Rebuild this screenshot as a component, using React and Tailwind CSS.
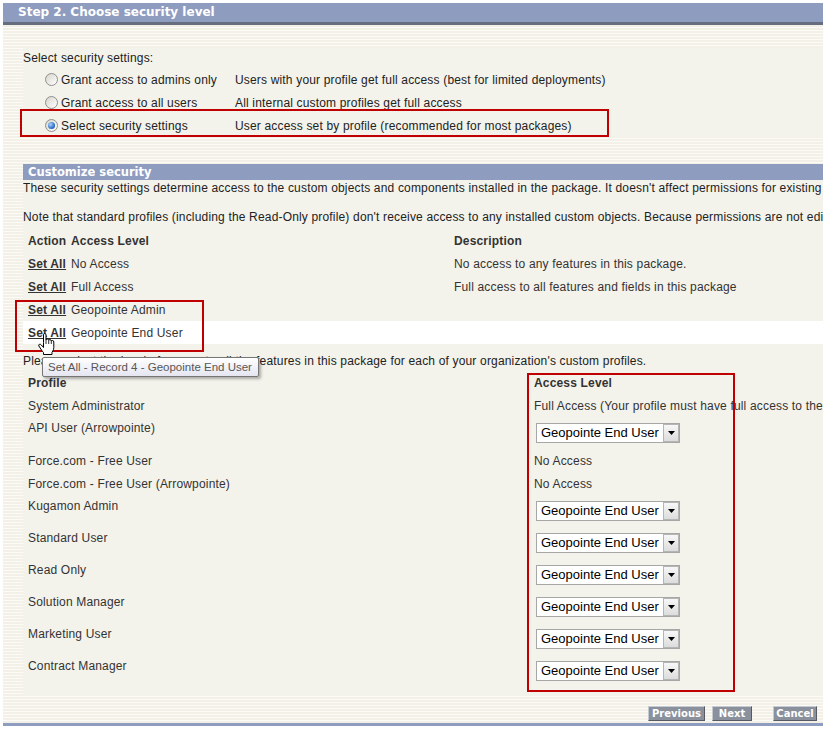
import React from 'react';

const options = [
  { label: 'Grant access to admins only', desc: 'Users with your profile get full access (best for limited deployments)' },
  { label: 'Grant access to all users', desc: 'All internal custom profiles get full access' },
  { label: 'Select security settings', desc: 'User access set by profile (recommended for most packages)', checked: true },
];

const levels = [
  { name: 'No Access', desc: 'No access to any features in this package.' },
  { name: 'Full Access', desc: 'Full access to all features and fields in this package' },
  { name: 'Geopointe Admin', desc: '' },
  { name: 'Geopointe End User', desc: '', hover: true },
];

const profiles = [
  { name: 'System Administrator', text: 'Full Access (Your profile must have full access to the package)' },
  { name: 'API User (Arrowpointe)', select: true },
  { name: 'Force.com - Free User', text: 'No Access' },
  { name: 'Force.com - Free User (Arrowpointe)', text: 'No Access' },
  { name: 'Kugamon Admin', select: true },
  { name: 'Standard User', select: true },
  { name: 'Read Only', select: true },
  { name: 'Solution Manager', select: true },
  { name: 'Marketing User', select: true },
  { name: 'Contract Manager', select: true },
];

function Radio({ checked }) {
  return (
    <span className="w-[13px] h-[13px] rounded-full border border-[#8f8f8f] bg-[linear-gradient(135deg,#d6d5cc,#ffffff)] flex items-center justify-center shrink-0">
      {checked && (
        <span className="w-[7px] h-[7px] rounded-full bg-[radial-gradient(circle_at_35%_35%,#a8d4ff,#2b6cc4_65%,#174c94)]" />
      )}
    </span>
  );
}

function Select() {
  return (
    <div className="mt-[6px] ml-[2px] w-[144px] h-[20px] border border-[#a7a7a7] bg-white flex items-center tracking-normal">
      <span className="flex-1 pl-[4px] text-[13px] leading-[18px] text-black whitespace-nowrap">Geopointe End User</span>
      <span className="w-[16px] h-[18px] border border-[#b5b5b5] bg-[linear-gradient(#f7f7f7,#dcdcdc)] flex items-center justify-center">
        <svg width="7" height="4" viewBox="0 0 7 4"><path d="M0 0H7L3.5 4Z" fill="#000" /></svg>
      </span>
    </div>
  );
}

function Btn({ children, w }) {
  return (
    <span className={`${w} h-[15px] bg-[#8a909c] border border-t-[#c5c9d1] border-l-[#c5c9d1] border-b-[#555a64] border-r-[#555a64] text-white font-bold font-['DejaVu_Sans',Verdana,sans-serif] text-[10px] leading-[13px] text-center tracking-normal`}>
      {children}
    </span>
  );
}

function Hand() {
  return (
    <svg width="17" height="22" viewBox="0 0 17 22">
      <path
        d="M5.5 9.5V1.8Q5.5 0.5 6.8 0.5Q8 0.5 8 1.8V7Q8.2 6 9.4 6Q10.6 6 10.7 7.2Q11 6.6 12 6.6Q13.2 6.6 13.3 8Q13.6 7.5 14.4 7.5Q15.8 7.5 15.8 9V14.5Q15.8 16.5 14.8 18L14 19.3V21.5H5.5V19.5Q4.5 18.5 3.5 17L0.9 13Q0.3 11.8 1.3 11.3Q2.4 10.9 3.3 12L5.5 14.5Z"
        fill="#fff"
        stroke="#000"
        strokeWidth="1"
        strokeLinejoin="round"
      />
      <path d="M8 7V11M10.7 7.2V11M13.3 8V11" stroke="#000" strokeWidth="0.8" fill="none" />
    </svg>
  );
}

export default function App() {
  return (
    <div className="w-[840px] h-[730px] bg-white overflow-hidden font-['Liberation_Sans',Arial,sans-serif] text-[12px] tracking-[0.17px] text-[#222]">
      <div className="ml-[3px] mt-[3px] w-[820px]">
        <div className="h-[22px] bg-[#8e9dbf] border-b-[3px] border-[#666d7e] pl-[15px] text-white font-bold font-['DejaVu_Sans',Verdana,sans-serif] text-[12px] leading-[19px] tracking-normal">
          Step 2. Choose security level
        </div>

        <div className="pl-[20px] pt-[23px] bg-[repeating-linear-gradient(180deg,#f2f0e7_0px,#f2f0e7_2px,#fcfbf7_2px,#fcfbf7_3px)]">
          {/* security choice */}
          <div className="relative bg-[#f3f2eb] pt-[3px]">
            <div className="leading-[15px]">Select security settings:</div>
            <div className="mt-[2px]">
              {options.map((o) => (
                <div key={o.label} className="h-[23px] flex items-center pl-[22px]">
                  <Radio checked={o.checked} />
                  <span className="ml-[3px] w-[174px]">{o.label}</span>
                  <span>{o.desc}</span>
                </div>
              ))}
            </div>
            <div className="absolute left-[-3px] top-[61px] w-[589px] h-[28px] border-2 border-[#c00000]" />
          </div>

          <div className="h-[27px]" />

          {/* customize */}
          <div className="relative">
            <div className="bg-[#f3f2eb] pb-[9px] overflow-hidden text-[#333]">
              <div className="h-[16px] bg-[#8e9dbf] pl-[5px] text-white font-bold font-['DejaVu_Sans',Verdana,sans-serif] text-[11.5px] leading-[16px] tracking-normal">
                Customize security
              </div>
              <div className="mt-[1px] leading-[15px] whitespace-nowrap text-[#222]">
                These security settings determine access to the custom objects and components installed in the package. It doesn't affect permissions for existing standard or custom profiles.
              </div>
              <div className="mt-[14px] leading-[15px] whitespace-nowrap text-[#222]">
                Note that standard profiles (including the Read-Only profile) don't receive access to any installed custom objects. Because permissions are not editable for standard profiles, they can't be changed.
              </div>

              <div className="mt-[4px]">
                <div className="h-[23px] flex items-center pl-[5px] font-bold">
                  <span className="w-[43px]">Action</span>
                  <span className="w-[383px]">Access Level</span>
                  <span>Description</span>
                </div>
                {levels.map((l) => (
                  <div key={l.name} className={`h-[23px] flex items-center pl-[5px] ${l.hover ? 'bg-white' : ''}`}>
                    <span className="w-[43px] font-bold underline">Set All</span>
                    <span className="w-[383px]">{l.name}</span>
                    <span>{l.desc}</span>
                  </div>
                ))}
              </div>

              <div className="mt-[10px] leading-[15px] whitespace-nowrap text-[#222]">
                Please select the level of access to all the features in this package for each of your organization's custom profiles.
              </div>

              <div className="mt-[2px]">
                <div className="h-[23px] flex items-center pl-[5px] font-bold">
                  <span className="w-[506px]">Profile</span>
                  <span>Access Level</span>
                </div>
                {profiles.map((p) =>
                  p.select ? (
                    <div key={p.name} className="h-[32px] flex items-start pl-[5px]">
                      <span className="w-[506px] pt-[4px] leading-[15px]">{p.name}</span>
                      <Select />
                    </div>
                  ) : (
                    <div key={p.name} className="h-[23px] flex items-center pl-[5px] whitespace-nowrap">
                      <span className="w-[506px] shrink-0">{p.name}</span>
                      <span>{p.text}</span>
                    </div>
                  )
                )}
              </div>
            </div>

            {/* annotations */}
            <div className="absolute left-[-8px] top-[136px] w-[189px] h-[52px] border-2 border-[#c00000]" />
            <div className="absolute left-[504px] top-[209px] w-[208px] h-[319px] border-2 border-[#c00000]" />
            <div className="absolute left-[19px] top-[193px] w-[217px] h-[20px] border border-[#767676] rounded-[2px] bg-[linear-gradient(#ffffff,#e4e5f0)] shadow-[2px_2px_3px_rgba(0,0,0,0.3)] pl-[5px] text-[11.5px] leading-[18px] text-[#575757] whitespace-nowrap tracking-normal">
              Set All - Record 4 - Geopointe End User
            </div>
            <div className="absolute left-[15px] top-[169px]">
              <Hand />
            </div>
          </div>

          <div className="h-[27px] pt-[10px] pr-[6px] flex justify-end">
            <Btn w="w-[57px]">Previous</Btn>
            <span className="w-[7px]" />
            <Btn w="w-[40px]">Next</Btn>
            <span className="w-[21px]" />
            <Btn w="w-[44px]">Cancel</Btn>
          </div>
        </div>
        <div className="h-[3px] bg-[#8e9dbf]" />
      </div>
    </div>
  );
}
